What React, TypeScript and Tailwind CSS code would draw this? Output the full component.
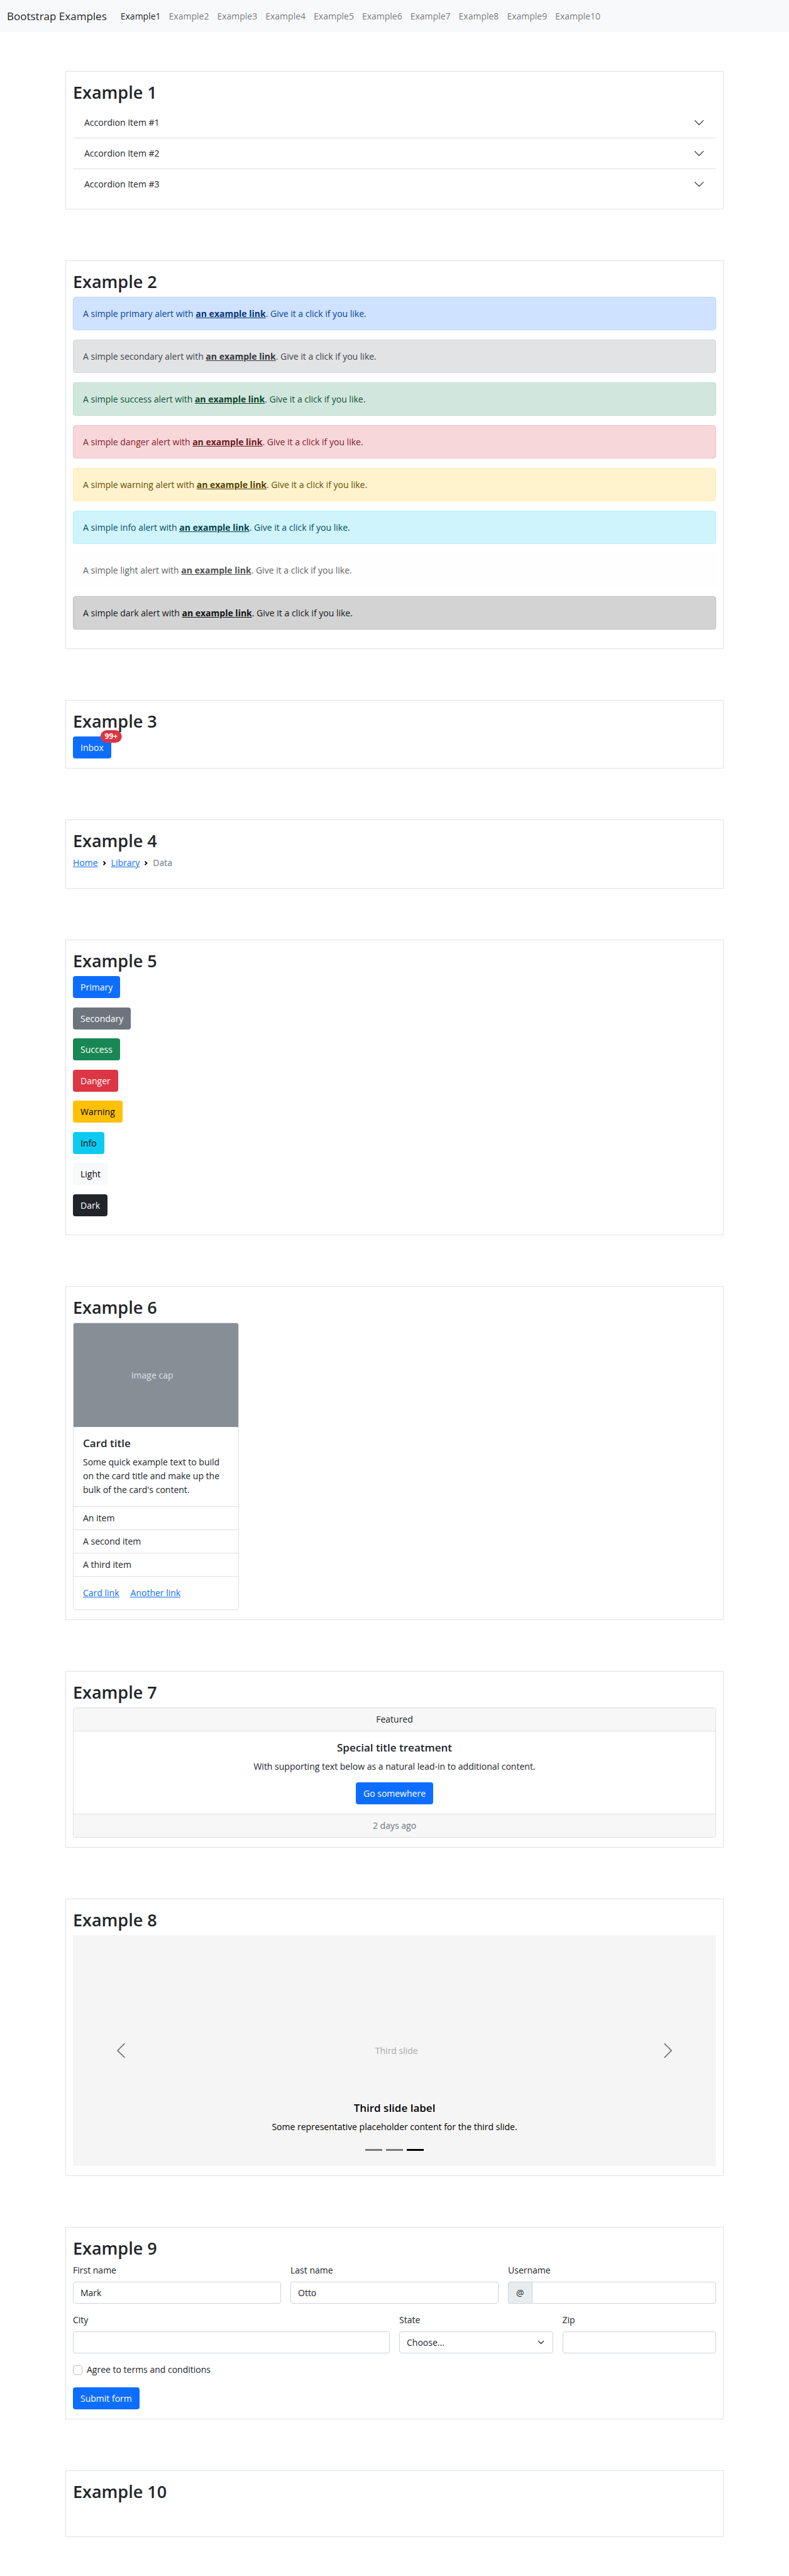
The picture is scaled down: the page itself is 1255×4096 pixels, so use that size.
import React from "react";

const alerts = [
  { name: "primary", box: "border-[#b6d4fe] bg-[#cfe2ff] text-[#084298]", link: "text-[#06357a]" },
  { name: "secondary", box: "border-[#d3d6d8] bg-[#e2e3e5] text-[#41464b]", link: "text-[#34383c]" },
  { name: "success", box: "border-[#badbcc] bg-[#d1e7dd] text-[#0f5132]", link: "text-[#0c4128]" },
  { name: "danger", box: "border-[#f5c2c7] bg-[#f8d7da] text-[#842029]", link: "text-[#6a1a21]" },
  { name: "warning", box: "border-[#ffecb5] bg-[#fff3cd] text-[#664d03]", link: "text-[#523e02]" },
  { name: "info", box: "border-[#b6effb] bg-[#cff4fc] text-[#055160]", link: "text-[#04414d]" },
  { name: "light", box: "border-[#fdfdfe] bg-[#fefefe] text-[#636464]", link: "text-[#4f5050]" },
  { name: "dark", box: "border-[#bcbebf] bg-[#d3d3d4] text-[#141619]", link: "text-[#101214]" },
];

const buttons = [
  { name: "Primary", tone: "bg-[#0d6efd] text-white" },
  { name: "Secondary", tone: "bg-[#6c757d] text-white" },
  { name: "Success", tone: "bg-[#198754] text-white" },
  { name: "Danger", tone: "bg-[#dc3545] text-white" },
  { name: "Warning", tone: "bg-[#ffc107] text-black" },
  { name: "Info", tone: "bg-[#0dcaf0] text-black" },
  { name: "Light", tone: "bg-[#f8f9fa] text-black" },
  { name: "Dark", tone: "bg-[#212529] text-white" },
];

const buttonBase = "h-[35px] rounded px-3 text-center leading-[35px]";
const fieldBase =
  "h-[35px] w-full min-w-0 rounded border border-[#ced4da] bg-white px-[11px] text-[#212529] outline-none";
const cardTitle = "mb-2 text-[17px] leading-[22px] font-semibold";

function Section({ n, children }: { n: number; children?: React.ReactNode }) {
  return (
    <section id={`example${n}`} className="border border-[#dee2e6] px-[11px] py-[15px]">
      <h2 className="mb-[7px] text-[27px] leading-[35px] font-semibold">Example {n}</h2>
      {children}
    </section>
  );
}

function Chevron({ d, className }: { d: string; className: string }) {
  return (
    <svg viewBox="0 0 16 16" fill="currentColor" className={className} aria-hidden="true">
      <path fillRule="evenodd" d={d} />
    </svg>
  );
}

const DOWN =
  "M1.646 4.646a.5.5 0 0 1 .708 0L8 10.293l5.646-5.647a.5.5 0 0 1 .708.708l-6 6a.5.5 0 0 1-.708 0l-6-6a.5.5 0 0 1 0-.708z";
const LEFT =
  "M11.354 1.646a.5.5 0 0 1 0 .708L5.707 8l5.647 5.646a.5.5 0 0 1-.708.708l-6-6a.5.5 0 0 1 0-.708l6-6a.5.5 0 0 1 .708 0z";
const RIGHT =
  "M4.646 1.646a.5.5 0 0 1 .708 0l6 6a.5.5 0 0 1 0 .708l-6 6a.5.5 0 0 1-.708-.708L10.293 8 4.646 2.354a.5.5 0 0 1 0-.708z";

function Divider() {
  return (
    <svg viewBox="0 0 8 8" className="mx-[7px] size-[7px]" aria-hidden="true">
      <path d="M2.5 0L1 1.5 3.5 4 1 6.5 2.5 8l4-4-4-4z" />
    </svg>
  );
}

function Field({ id, label, span, children }: { id: string; label: string; span: string; children: React.ReactNode }) {
  return (
    <div className={span}>
      <label htmlFor={id} className="mb-[7px] block">
        {label}
      </label>
      {children}
    </div>
  );
}

export default function App() {
  return (
    <div className="bg-white font-['Open_Sans','Noto_Sans',sans-serif] text-[14px] leading-[22px] text-[#212529]">
      <nav className="flex h-[51px] items-center bg-[#f8f9fa] px-[11px]">
        <a href="#" className="mr-[22px] text-[17px] text-black/90">
          Bootstrap Examples
        </a>
        <ul className="flex gap-[13px]">
          {Array.from({ length: 10 }, (_, i) => (
            <li key={i}>
              <a href={`#example${i + 1}`} className={i === 0 ? "text-black/90" : "text-black/55"}>
                Example{i + 1}
              </a>
            </li>
          ))}
        </ul>
      </nav>

      <main className="mx-auto flex w-full max-w-[1047px] flex-col gap-[81px] py-[62px]">
        <Section n={1}>
          <div className="divide-y divide-[#dfdfdf]">
            {[1, 2, 3].map((n) => (
              <h3 key={n}>
                <button type="button" className="flex h-[48px] w-full items-center justify-between px-[18px] text-left">
                  Accordion Item #{n}
                  <Chevron d={DOWN} className="size-[18px]" />
                </button>
              </h3>
            ))}
          </div>
        </Section>

        <Section n={2}>
          {alerts.map((a) => (
            <div key={a.name} role="alert" className={`mb-[15px] rounded border px-[15px] py-[15px] leading-[21px] ${a.box}`}>
              A simple {a.name} alert with{" "}
              <a href="#" className={`font-bold underline ${a.link}`}>
                an example link
              </a>
              . Give it a click if you like.
            </div>
          ))}
        </Section>

        <Section n={3}>
          <button type="button" className={`relative block bg-[#0d6efd] text-white ${buttonBase}`}>
            Inbox
            <span className="absolute top-0 left-full -translate-x-1/2 -translate-y-1/2 rounded-full bg-[#dc3545] px-[7px] py-1 text-[12px] leading-[12px] font-bold">
              99+
            </span>
          </button>
        </Section>

        <Section n={4}>
          <nav aria-label="breadcrumb">
            <ol className="mb-[14px] flex">
              <li>
                <a href="#" className="text-[#0d6efd] underline">
                  Home
                </a>
              </li>
              <li className="flex items-center">
                <Divider />
                <a href="#" className="text-[#0d6efd] underline">
                  Library
                </a>
              </li>
              <li className="flex items-center text-[#6c757d]" aria-current="page">
                <Divider />
                Data
              </li>
            </ol>
          </nav>
        </Section>

        <Section n={5}>
          <div className="mb-[14px] flex min-h-[382px] flex-col items-start justify-between">
            {buttons.map((b) => (
              <button key={b.name} type="button" className={`${buttonBase} ${b.tone}`}>
                {b.name}
              </button>
            ))}
          </div>
        </Section>

        <Section n={6}>
          <article className="w-full max-w-[264px] overflow-hidden rounded border border-[#dfdfdf]">
            <div className="flex h-[165px] items-center bg-[#868e96] pl-[35%] text-[#dee2e6]">Image cap</div>
            <div className="p-[15px]">
              <h3 className={cardTitle}>Card title</h3>
              <p>Some quick example text to build on the card title and make up the bulk of the card's content.</p>
            </div>
            <ul className="divide-y divide-[#dfdfdf] border-y border-[#dfdfdf]">
              {["An item", "A second item", "A third item"].map((t) => (
                <li key={t} className="px-[15px] py-[7px]">
                  {t}
                </li>
              ))}
            </ul>
            <div className="flex gap-[18px] p-[15px] text-[#0d6efd] underline">
              <a href="#">Card link</a>
              <a href="#">Another link</a>
            </div>
          </article>
        </Section>

        <Section n={7}>
          <article className="overflow-hidden rounded border border-[#dfdfdf] text-center">
            <div className="border-b border-[#dfdfdf] bg-[#f7f7f7] py-[7px]">Featured</div>
            <div className="p-[15px]">
              <h3 className={cardTitle}>Special title treatment</h3>
              <p className="mb-[14px]">With supporting text below as a natural lead-in to additional content.</p>
              <a href="#" className={`inline-block bg-[#0d6efd] align-top text-white ${buttonBase}`}>
                Go somewhere
              </a>
            </div>
            <div className="border-t border-[#dfdfdf] bg-[#f7f7f7] py-[7px] text-[#6c757d]">2 days ago</div>
          </article>
        </Section>

        <Section n={8}>
          <div className="relative flex h-[367px] items-center bg-[#f5f5f5] pl-[47%] text-[#aaa]">
            Third slide
            <button type="button" aria-label="Previous" className="absolute inset-y-0 left-0 flex w-[15%] items-center justify-center text-black/50">
              <Chevron d={LEFT} className="size-[29px]" />
            </button>
            <button type="button" aria-label="Next" className="absolute inset-y-0 right-0 flex w-[15%] items-center justify-center text-black/50">
              <Chevron d={RIGHT} className="size-[29px]" />
            </button>
            <div className="absolute inset-x-[15%] bottom-[24px] flex flex-col items-center text-center text-black">
              <h3 className={cardTitle}>Third slide label</h3>
              <p className="mb-[24px]">Some representative placeholder content for the third slide.</p>
              <div className="flex gap-[6px]">
                <button type="button" aria-label="Slide 1" className="h-[3px] w-[27px] bg-black/50" />
                <button type="button" aria-label="Slide 2" className="h-[3px] w-[27px] bg-black/50" />
                <button type="button" aria-label="Slide 3" className="h-[3px] w-[27px] bg-black" />
              </div>
            </div>
          </div>
        </Section>

        <Section n={9}>
          <form className="grid grid-cols-12 gap-[15px]" onSubmit={(e) => e.preventDefault()}>
            <Field id="first" label="First name" span="col-span-4">
              <input id="first" type="text" defaultValue="Mark" className={fieldBase} />
            </Field>
            <Field id="last" label="Last name" span="col-span-4">
              <input id="last" type="text" defaultValue="Otto" className={fieldBase} />
            </Field>
            <Field id="user" label="Username" span="col-span-4">
              <div className="flex">
                <span className="flex h-[35px] items-center rounded-l border border-r-0 border-[#ced4da] bg-[#e9ecef] px-[12px]">@</span>
                <input id="user" type="text" className="h-[35px] w-full min-w-0 rounded-r border border-[#ced4da] bg-white px-[11px] outline-none" />
              </div>
            </Field>
            <Field id="city" label="City" span="col-span-6">
              <input id="city" type="text" className={fieldBase} />
            </Field>
            <Field id="state" label="State" span="col-span-3">
              <div className="relative">
                <select id="state" defaultValue="Choose..." className={`appearance-none ${fieldBase}`}>
                  <option>Choose...</option>
                  <option>...</option>
                </select>
                <svg viewBox="0 0 16 16" className="pointer-events-none absolute top-[12px] right-[14px] size-[11px]" aria-hidden="true">
                  <path fill="none" stroke="#343a40" strokeLinecap="round" strokeLinejoin="round" strokeWidth="2" d="M2 5l6 6 6-6" />
                </svg>
              </div>
            </Field>
            <Field id="zip" label="Zip" span="col-span-3">
              <input id="zip" type="text" className={fieldBase} />
            </Field>
            <div className="col-span-12 mb-[2px] flex items-center gap-[7px]">
              <input id="terms" type="checkbox" className="size-[15px] appearance-none rounded border border-[#bfbfbf] bg-white" />
              <label htmlFor="terms">Agree to terms and conditions</label>
            </div>
            <div className="col-span-12">
              <button type="submit" className={`block bg-[#0d6efd] text-white ${buttonBase}`}>
                Submit form
              </button>
            </div>
          </form>
        </Section>

        <Section n={10}>
          <div className="h-8" />
        </Section>
      </main>
    </div>
  );
}
